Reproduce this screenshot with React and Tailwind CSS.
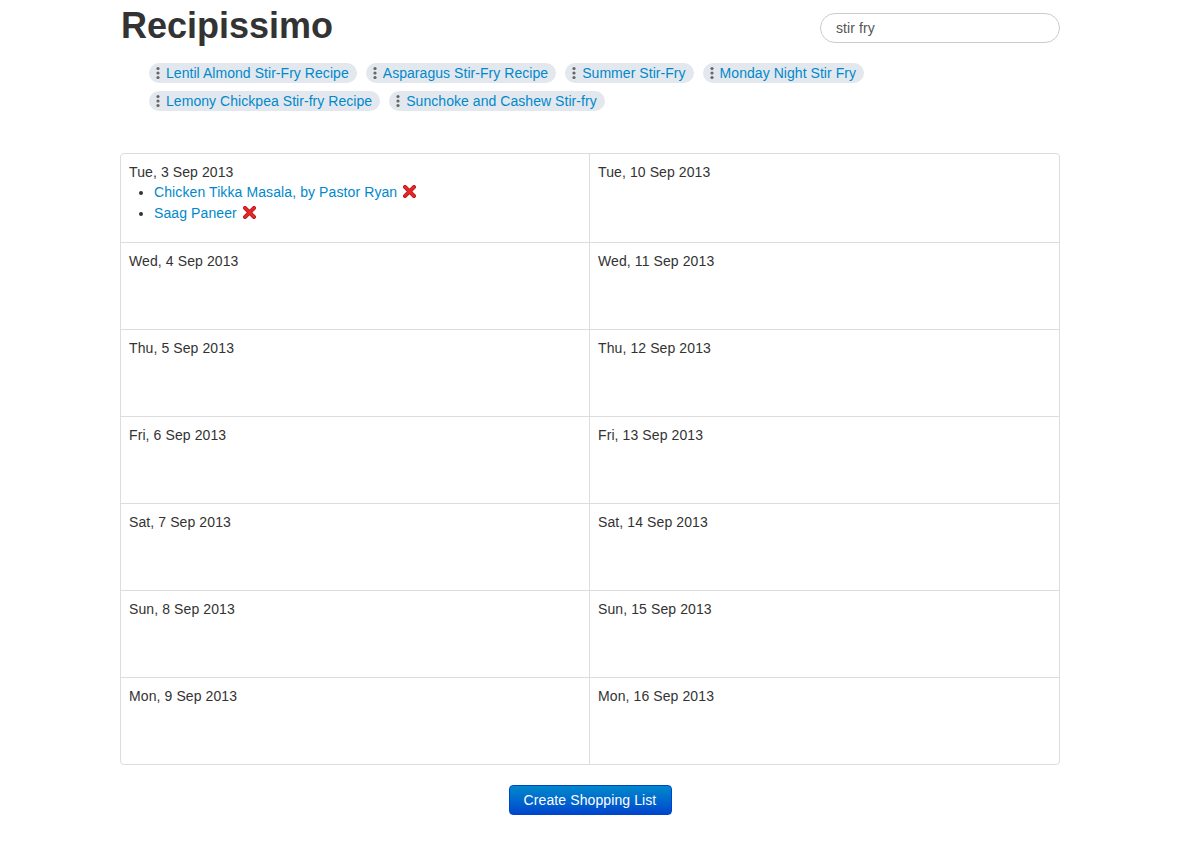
import React from "react";

const tags1 = ["Lentil Almond Stir-Fry Recipe", "Asparagus Stir-Fry Recipe", "Summer Stir-Fry", "Monday Night Stir Fry"];
const tags2 = ["Lemony Chickpea Stir-fry Recipe", "Sunchoke and Cashew Stir-fry"];

const left = ["Tue, 3 Sep 2013", "Wed, 4 Sep 2013", "Thu, 5 Sep 2013", "Fri, 6 Sep 2013", "Sat, 7 Sep 2013", "Sun, 8 Sep 2013", "Mon, 9 Sep 2013"];
const right = ["Tue, 10 Sep 2013", "Wed, 11 Sep 2013", "Thu, 12 Sep 2013", "Fri, 13 Sep 2013", "Sat, 14 Sep 2013", "Sun, 15 Sep 2013", "Mon, 16 Sep 2013"];

function Handle() {
  return (
    <svg width="6" height="14" viewBox="0 0 6 14" className="shrink-0">
      <circle cx="3" cy="2.5" r="1.6" fill="#666" />
      <circle cx="3" cy="7" r="1.6" fill="#666" />
      <circle cx="3" cy="11.5" r="1.6" fill="#666" />
    </svg>
  );
}

function Tag({ label }) {
  return (
    <span className="inline-flex items-center h-[20px] pl-[6px] pr-[8px] gap-[5px] rounded-full bg-[#e3e8ee] text-[#0088cc] text-[14px] leading-[20px] tracking-[0.05px]">
      <Handle />
      <span>{label}</span>
    </span>
  );
}

function RemoveX() {
  return (
    <svg width="13" height="13" viewBox="0 0 13 13" className="inline-block ml-[6px] align-[-1px]">
      <path d="M2 2 L11 11 M11 2 L2 11" stroke="#b51b1b" strokeWidth="4" strokeLinecap="square" />
      <path d="M2 2 L11 11 M11 2 L2 11" stroke="#e0272b" strokeWidth="2.6" strokeLinecap="square" />
    </svg>
  );
}

export default function App() {
  return (
    <div className="w-full min-h-[846px] bg-white text-[#333] text-[14px] leading-[20px] tracking-[0.1px]" style={{ fontFamily: '"Liberation Sans", Arial, sans-serif' }}>
      <div className="w-[940px] ml-[120px]">
        <div className="flex items-start justify-between">
          <h1 className="mt-[6px] text-[36px] leading-[40px] font-bold text-[#333] ml-[1px] tracking-normal">Recipissimo</h1>
          <div className="mt-[13px] w-[240px] h-[30px] rounded-full border border-[#ccc] flex items-center pl-[15px] text-[14px] text-[#555]">stir fry</div>
        </div>
        <div className="ml-[29px] mt-[17px] flex flex-col gap-[8px]">
          <div className="flex gap-[9px]">
            {tags1.map((t) => <Tag key={t} label={t} />)}
          </div>
          <div className="flex gap-[9px]">
            {tags2.map((t) => <Tag key={t} label={t} />)}
          </div>
        </div>
        <div className="mt-[42px] border border-[#ddd] rounded-[4px] grid grid-cols-[468px_1fr]">
          {left.map((d, i) => (
            <React.Fragment key={d}>
              <div className={`${i === 0 ? "h-[88px]" : "h-[87px] border-t border-[#ddd]"} px-[8px] pt-[8px]`}>
                <div>{d}</div>
                {i === 0 && (
                  <ul className="list-disc ml-[25px]">
                    <li className="leading-[21px]"><span className="text-[#0088cc]">Chicken Tikka Masala, by Pastor Ryan</span><RemoveX /></li>
                    <li className="leading-[21px]"><span className="text-[#0088cc]">Saag Paneer</span><RemoveX /></li>
                  </ul>
                )}
              </div>
              <div className={`${i === 0 ? "h-[88px]" : "h-[87px] border-t"} border-l border-[#ddd] px-[8px] pt-[8px]`}>
                {right[i]}
              </div>
            </React.Fragment>
          ))}
        </div>
        <div className="flex justify-center mt-[20px]">
          <button className="h-[30px] w-[163px] rounded-[4px] border border-[#0044cc] bg-gradient-to-b from-[#0088cc] to-[#0044cc] text-white text-[14px]" style={{ fontFamily: '"Liberation Sans", Arial, sans-serif' }}>
            Create Shopping List
          </button>
        </div>
      </div>
    </div>
  );
}
